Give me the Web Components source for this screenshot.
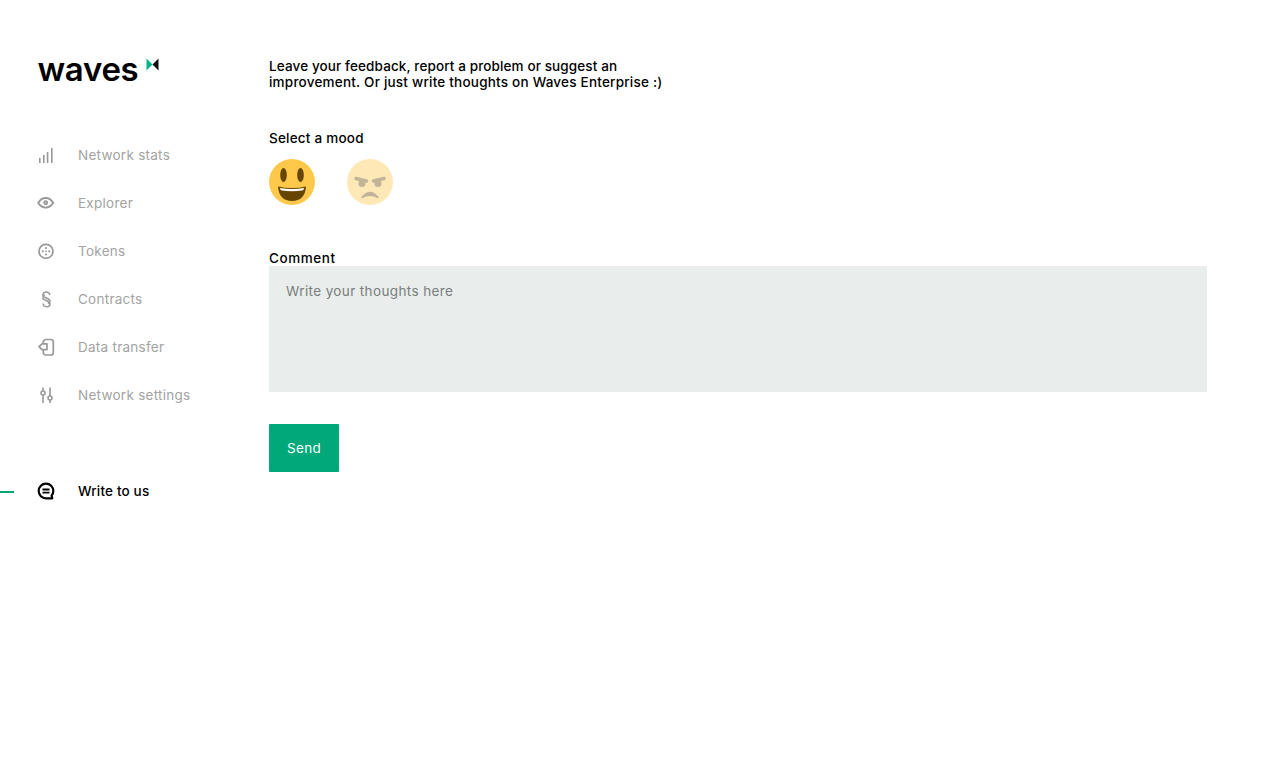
<!DOCTYPE html>
<html lang="en"><head><meta charset="utf-8"><title>Feedback</title>
<style>
html,body{margin:0;padding:0;background:#fff;height:100%}
body{font-family:Inter,"Open Sans","Liberation Sans",sans-serif;font-size:13px;color:#000}
app-shell{height:769px}
</style></head><body>
<app-shell>
  <side-bar slot="side">
    <brand-logo></brand-logo>
    <nav-item icon="stats">Network stats</nav-item>
    <nav-item icon="eye">Explorer</nav-item>
    <nav-item icon="token">Tokens</nav-item>
    <nav-item icon="section">Contracts</nav-item>
    <nav-item icon="transfer">Data transfer</nav-item>
    <nav-item icon="settings">Network settings</nav-item>
    <nav-item icon="chat" active style="margin-top:48px">Write to us</nav-item>
  </side-bar>
  <feedback-form></feedback-form>
</app-shell>
<script>
const ICONS={
stats:'<g fill="none" stroke="#999" stroke-width="1.600"><path d="M2.800 18v-5M6.800 18v-8M10.600 18V7M14.800 18V3"/></g>',
eye:'<g fill="none" stroke="#999" stroke-width="1.900"><path d="M1.200 9.800C3.500 6.200 6 5 8.700 5s5.200 1.200 7.500 4.800c-2.300 3.600-4.800 4.800-7.500 4.800s-5.200-1.200-7.500-4.800z"/><circle cx="8.700" cy="9.800" r="1.500"/></g>',
token:'<circle cx="9" cy="10.300" r="7" fill="none" stroke="#999" stroke-width="1.700"/><g fill="#999"><circle cx="9" cy="7.100" r="1.100"/><circle cx="5.800" cy="10.300" r="1.100"/><circle cx="12.200" cy="10.300" r="1.100"/><circle cx="9" cy="13.500" r="1.100"/><circle cx="9" cy="10.300" r=".9"/></g>',
section:'<path d="M12.800 6C12.500 4.200 11 3 9.300 3 7.400 3 5.800 4.200 5.800 5.800c0 3.500 7.200 2.800 7.200 6.400 0 1.100-.8 2-2.100 2.500M6 14.500C6.300 16.600 7.800 17.700 9.500 17.700c1.900 0 3.500-1.200 3.500-2.800 0-3.500-7.200-2.800-7.200-6.400 0-1.100.8-2 2.100-2.500" fill="none" stroke="#999" stroke-width="1.500"/>',
transfer:'<path d="M6.300 6.500V5a2.500 2.500 0 0 1 2.500-2.500h5A2.500 2.500 0 0 1 16.300 5v10.500a2.500 2.500 0 0 1-2.500 2.500h-5a2.500 2.500 0 0 1-2.500-2.500V13M10 6.800H5L2 9.700l3 2.900h5z" fill="none" stroke="#999" stroke-width="1.700" stroke-linejoin="round"/>',
settings:'<g fill="none" stroke="#999" stroke-width="1.600"><path d="M6 2.500v3.500M6 10V18M13 2.500v8.500M13 15v3"/><circle cx="6" cy="8" r="2"/><circle cx="13" cy="13" r="2"/></g>',
chat:'<path d="M15.300 17.300H9A7.300 7.300 0 1 1 16.300 10c0 1.900-.6 3.300-1.700 4.600z" fill="none" stroke="#000" stroke-width="2.200" stroke-linejoin="round"/><path d="M5.500 8.500h7M5.500 11.700h7" stroke="#000" stroke-width="1.800"/>'
};
function def(name,html,init){customElements.define(name,class extends HTMLElement{
  constructor(){super();const r=this.attachShadow({mode:'open'});const t=document.createElement('template');t.innerHTML=html;r.appendChild(t.content.cloneNode(true));}
  connectedCallback(){init&&init.call(this,this.shadowRoot);}
});}
def('app-shell',`<style>:host{display:flex;align-items:flex-start;width:1275px}
.side{flex:0 0 269px;width:269px}.main{flex:1}</style>
<div class="side"><slot name="side"></slot></div><div class="main"><slot></slot></div>`);
def('side-bar',`<style>:host{display:block;padding-top:56px;box-sizing:border-box}
.list{display:flex;flex-direction:column}</style><div class="list"><slot></slot></div>`);
def('brand-logo',`<style>:host{display:flex;align-items:flex-start;height:75px;padding-left:37.500px;box-sizing:border-box}
.w{font:600 33px/26px Inter,"Open Sans",sans-serif;letter-spacing:-.3px;color:#000;width:108px;height:26px}
svg{margin-top:1.500px}</style><span class="w">waves</span><svg width="14" height="13" viewBox="0 0 14 13"><path d="M.5 .5 L6.500 6.500 L.5 12.500z" fill="#00b586"/><path d="M12.500 .5 L6.500 6.500 L12.500 12.500z" fill="#111"/></svg>`);
def('nav-item',`<style>:host{display:flex;align-items:center;height:48px;position:relative;padding-left:37px;box-sizing:border-box;font-size:13.500px;color:#a3a3a3;font-weight:400;letter-spacing:.26px}
:host([active]){color:#000;font-weight:500;letter-spacing:.17px}
svg{width:18px;height:20px;margin-right:23px;flex:none}
.mark{display:none;position:absolute;left:0;top:23.500px;width:14px;height:2px;background:#00a57a}
:host([active]) .mark{display:block}</style><span class="mark"></span><svg viewBox="0 0 18 20"></svg><slot></slot>`,
function(r){r.querySelector('svg').innerHTML=ICONS[this.getAttribute('icon')]||'';});
def('feedback-form',`<style>:host{display:block;width:938px;padding-top:58px;font-size:13.500px;font-weight:500;color:#000}
p{margin:0;line-height:16px;letter-spacing:.12px}
p span{letter-spacing:.22px}
.lab{line-height:16px;letter-spacing:.22px}
.m1{margin-top:40px}
.moods{display:flex;gap:32px;margin-top:13px}
.c{margin-top:45px;height:16px;line-height:16px;letter-spacing:.55px}
.box{height:126px;background:#e9edec;padding:17px;box-sizing:border-box;color:#7a7e7d;font-weight:400;line-height:16px;letter-spacing:.38px}
button{display:block;margin-top:32px;width:70px;height:48px;background:#00a87a;color:#fff;border:0;border-radius:1px;font:400 13.500px Inter,"Open Sans",sans-serif;padding:0;letter-spacing:.3px}
</style>
<p>Leave your feedback, report a problem or suggest an<br><span>improvement. Or just write thoughts on Waves Enterprise :)</span></p>
<div class="lab m1">Select a mood</div>
<div class="moods"><mood-face kind="happy"></mood-face><mood-face kind="angry"></mood-face></div>
<div class="c">Comment</div>
<div class="box">Write your thoughts here</div>
<button>Send</button>`);
def('mood-face',`<style>:host{display:block;width:46px;height:46px}:host([kind=angry]){opacity:.4}svg{display:block}</style><svg width="46" height="46" viewBox="0 0 46 46"></svg>`,
function(r){const s=r.querySelector('svg');
 s.innerHTML=this.getAttribute('kind')==='happy'?
 '<circle cx="23" cy="23" r="23" fill="#fec84b"/><ellipse cx="14.500" cy="16" rx="3.300" ry="7" fill="#664500"/><ellipse cx="31.500" cy="16" rx="3.300" ry="7" fill="#664500"/><path d="M9 27.500Q23 30.500 37 27.500Q36 42 23 42Q10 42 9 27.500z" fill="#664500"/><path d="M11 29Q23 31 35 29L34.300 31.300Q23 33 11.700 31.300z" fill="#fff"/>':
 '<circle cx="23" cy="23" r="23" fill="#fec84b"/><path d="M9 19.500L19.500 22" stroke="#664500" stroke-width="3.500" stroke-linecap="round"/><path d="M37 19.500L26.500 22" stroke="#664500" stroke-width="3.500" stroke-linecap="round"/><ellipse cx="15" cy="24.500" rx="3.500" ry="3.500" fill="#664500"/><ellipse cx="31" cy="24.500" rx="3.500" ry="3.500" fill="#664500"/><path d="M15 38.500Q23 28.500 31 38.500Q23 34 15 38.500z" fill="#664500" stroke="#664500" stroke-width="1.500" stroke-linejoin="round"/>';});
</script>
</body></html>
